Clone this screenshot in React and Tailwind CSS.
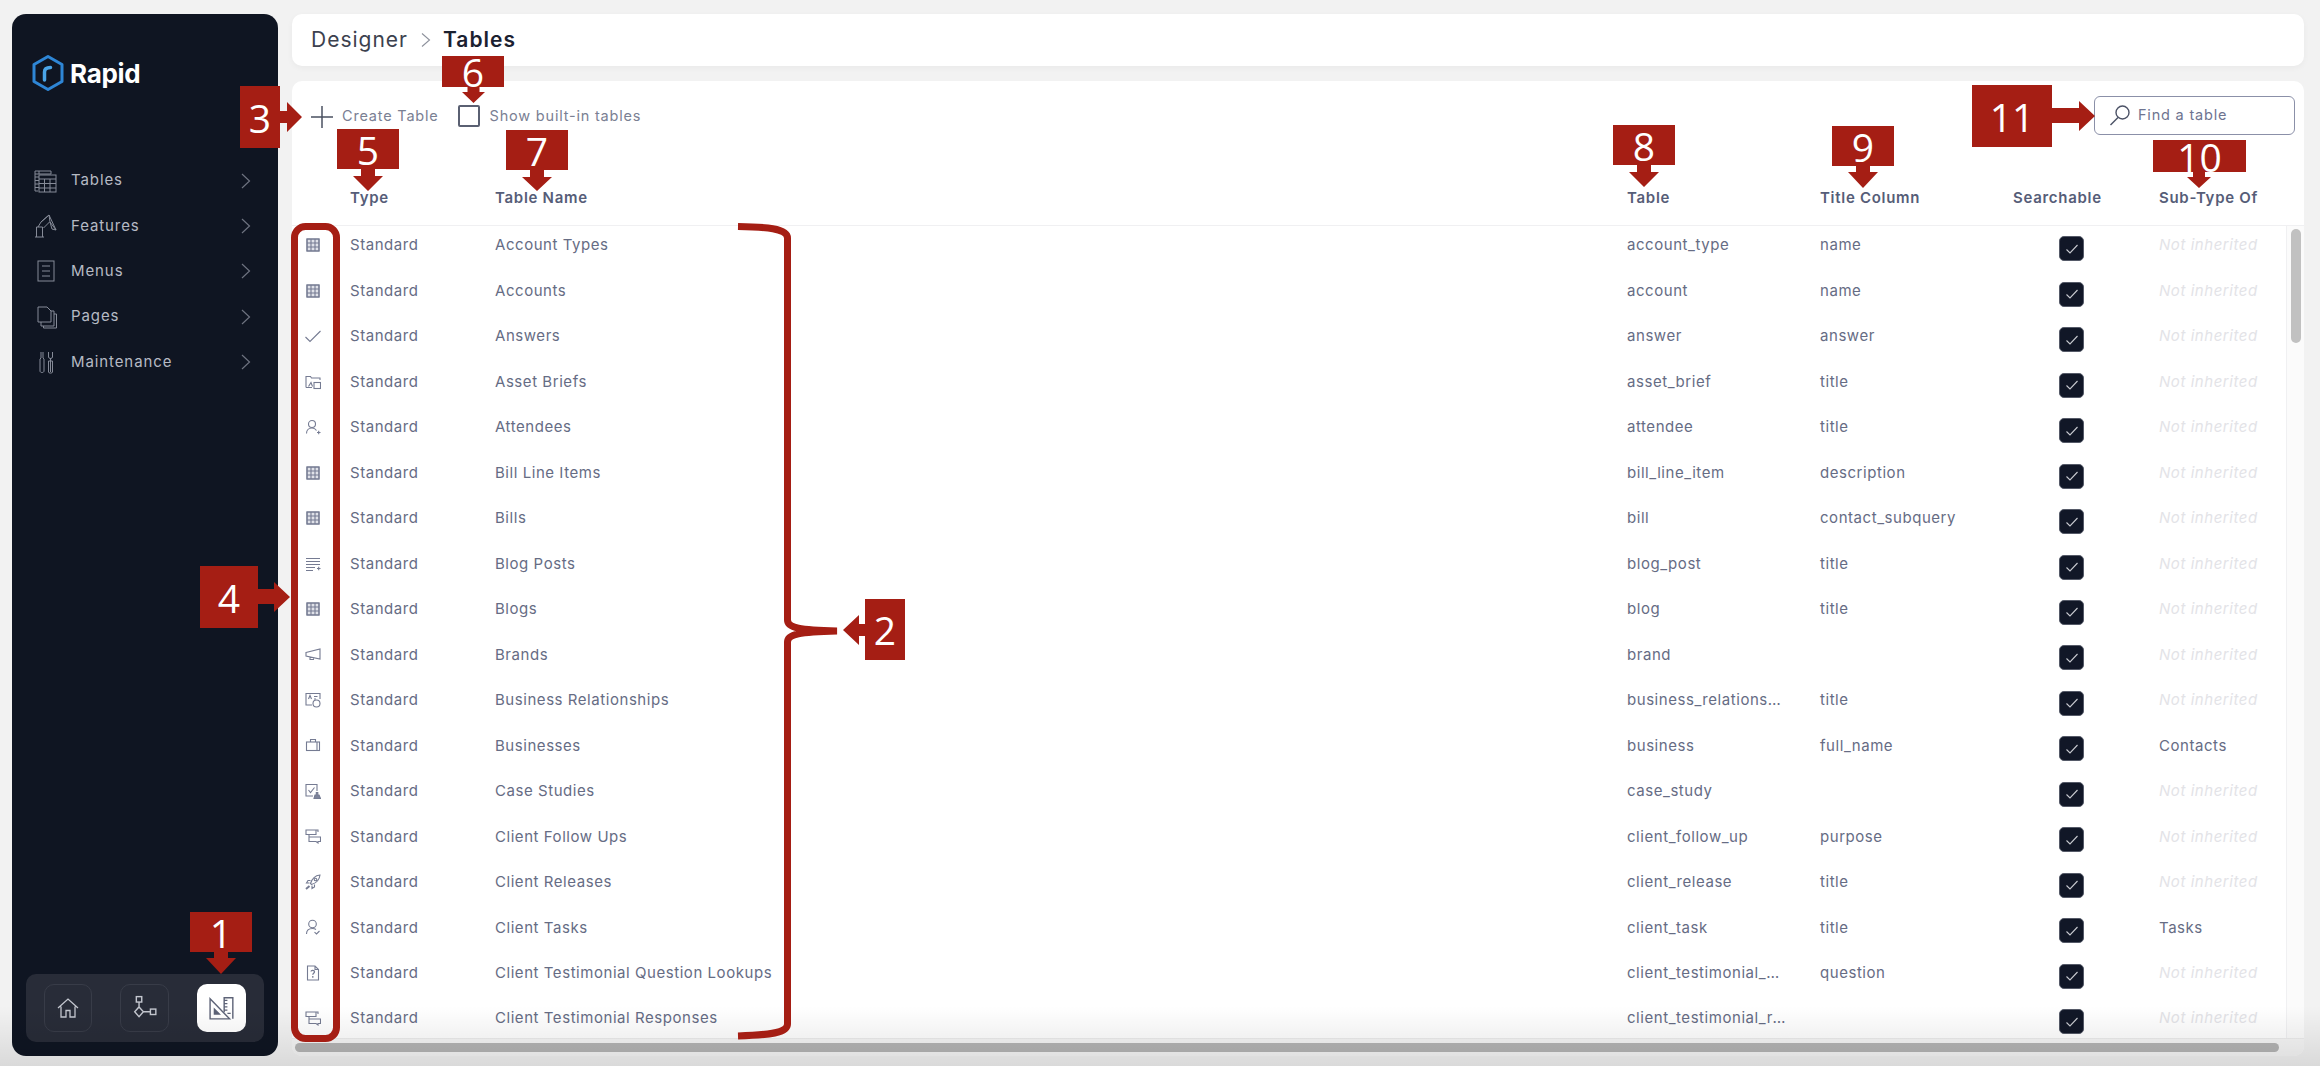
import React from 'react';

const rows = [
    { icon: 'table', name: 'Account Types', table: 'account_type', title: 'name' },
    { icon: 'table', name: 'Accounts', table: 'account', title: 'name' },
    { icon: 'check', name: 'Answers', table: 'answer', title: 'answer' },
    { icon: 'media', name: 'Asset Briefs', table: 'asset_brief', title: 'title' },
    { icon: 'userPlus', name: 'Attendees', table: 'attendee', title: 'title' },
    { icon: 'table', name: 'Bill Line Items', table: 'bill_line_item', title: 'description' },
    { icon: 'table', name: 'Bills', table: 'bill', title: 'contact_subquery' },
    { icon: 'list', name: 'Blog Posts', table: 'blog_post', title: 'title' },
    { icon: 'table', name: 'Blogs', table: 'blog', title: 'title' },
    { icon: 'megaphone', name: 'Brands', table: 'brand', title: '' },
    { icon: 'card', name: 'Business Relationships', table: 'business_relationship', title: 'title' },
    { icon: 'briefcase', name: 'Businesses', table: 'business', title: 'full_name', parent: 'Contacts' },
    { icon: 'caseStudy', name: 'Case Studies', table: 'case_study', title: '' },
    { icon: 'chat', name: 'Client Follow Ups', table: 'client_follow_up', title: 'purpose' },
    { icon: 'rocket', name: 'Client Releases', table: 'client_release', title: 'title' },
    { icon: 'userCheck', name: 'Client Tasks', table: 'client_task', title: 'title', parent: 'Tasks' },
    { icon: 'fileQuestion', name: 'Client Testimonial Question Lookups', table: 'client_testimonial_question_lookup', title: 'question' },
    { icon: 'chat', name: 'Client Testimonial Responses', table: 'client_testimonial_response', title: '' },
];

const menu = [
    { icon: 'tables', label: 'Tables' },
    { icon: 'features', label: 'Features' },
    { icon: 'menus', label: 'Menus' },
    { icon: 'pages', label: 'Pages' },
    { icon: 'maintenance', label: 'Maintenance' },
];

function RowIcon({ type }) {
    const shapes = {
        table: (
            <g transform="translate(1.5 1.5)">
                <rect x="0.5" y="0.5" width="12" height="12" fill="#dfe1e8" />
                <path d="M0.5 0.5h12v12h-12zM0.5 4.5h12M0.5 8.5h12M4.5 0.5v12M8.5 0.5v12" />
            </g>
        ),
        check: <path d="M0.5 9l4.5 4.5L15.5 3" />,
        media: (
            <g>
                <path d="M1 13.5V2.500h4.500l1 1.500h8.500v2M1 13.500h6" />
                <rect x="9" y="8.500" width="6.500" height="6" />
                <path d="M3.500 12.500l2.500-4 1.500 4" />
            </g>
        ),
        userPlus: (
            <g>
                <circle cx="7" cy="5" r="3.500" />
                <path d="M1.500 14.500c0-3.500 2.500-5.500 5.500-5.500 2 0 3.500 1 4.500 2.500M12 13.500h3.500M13.700 11.800v3.500" />
            </g>
        ),
        list: <path d="M1 2.500h14M1 5.500h14M1 8.500h14M1 11.500h9M1 14.500h7M12 12.500h3.500M13.700 10.800v3.500" />,
        megaphone: <path d="M1 6.500l14-3.500v10L1 10zM1 6.500v3.500M5 10.800v2.700h3.500v-2" />,
        card: (
            <g>
                <path d="M7 13H1V1.500h14V7" />
                <path d="M3.500 7l1.500-3.500L6.500 7M9 4.500h3.500M9 7h2" />
                <circle cx="11.500" cy="11.500" r="3.500" />
            </g>
        ),
        briefcase: (
            <g>
                <rect x="1.500" y="5" width="13" height="8.500" />
                <path d="M5.500 5V2.500h5V5M12 5v8.500" />
            </g>
        ),
        caseStudy: (
            <g>
                <path d="M8 13H1V1.500h11V8" />
                <path d="M3.500 7l2 2.500 4-5" />
                <path d="M9 15.500h6.500l-1.500-3.500h-1.200v-2.500h-1.500V12h-1.300z" fill="#7d839a" />
            </g>
        ),
        chat: <path d="M1 2h10v4.500H1zM11 2h2v2M4 6.500V9M4 9h11.500v4.500h-2.500v1.500l-2-1.500H4z" />,
        rocket: (
            <g>
                <path d="M5.500 9.500C7 4.500 10.500 1.500 15 1c-.5 4.500-3.500 8-8.500 9.500zM5.500 6.500H3L1.500 9h3M9.500 10.500V13L7 14.500v-3" />
                <circle cx="10.500" cy="5.500" r="1.300" />
                <path d="M1 15l3.500-3" strokeWidth="2" />
            </g>
        ),
        userCheck: (
            <g>
                <circle cx="7.500" cy="5" r="3.800" />
                <path d="M1.500 15c0-3.500 2.500-5.500 6-5.500 1.500 0 2.500.3 3.500 1M9.500 13.200l2 1.800 3-3" />
            </g>
        ),
        fileQuestion: (
            <g>
                <path d="M2.500 1h7.500l3.500 3.500V15h-11zM10 1v3.500h3.500" />
                <path d="M6 6.500c.2-1.500 3.500-1.500 3.500.3 0 1.500-1.700 1.500-1.700 3M7.800 11v1.800" strokeWidth="1.300" />
            </g>
        ),
    };
    return (
        <svg viewBox="0 0 16 16" fill="none" stroke="#757b92" strokeWidth="1.100" className="w-4 h-4 ml-[13px]">
            {shapes[type]}
        </svg>
    );
}

function MenuIcon({ type }) {
    const shapes = {
        tables: (
            <g>
                <path d="M4 22H1V2h16v3M1 5h16M1 8h4M1 11.500h4M1 15h4M1 18.500h4M5 2v3" />
                <rect x="5" y="6" width="17" height="17" />
                <path d="M5 10h17M5 14.500h17M5 19h17M10.500 10v13M16 10v13" />
            </g>
        ),
        features: (
            <g>
                <path d="M1 23h9M2.500 23V13h6v10M4 13l3-5 8-7 7 15M7 8l8-7M9.500 14l6-6M15 1l1 7 6 8-4-1-2-7" />
            </g>
        ),
        menus: (
            <g>
                <rect x="4" y="2" width="16" height="20" />
                <path d="M8 7h8M8 12h8M8 17h8" />
            </g>
        ),
        pages: (
            <g>
                <path d="M4 17V2h9l4 4v11z" />
                <path d="M17 6h3v15H7v-4M20 9h2.500v14H9.500v-2" />
            </g>
        ),
        maintenance: (
            <g>
                <path d="M7 2v6l-1 1v12c0 2 4 2 4 0V9L9 8V2M16.500 8v14M14.500 22c0 1.500 4 1.500 4 0V11h-4zM14.500 2v5c0 2 4 2 4 0V2" />
            </g>
        ),
    };
    return (
        <svg viewBox="0 0 24 24" fill="none" stroke="#868b98" strokeWidth="1" className="w-6 h-6">
            {shapes[type]}
        </svg>
    );
}

function Sidebar() {
    return (
        <aside className="w-[266px] shrink-0 rounded-[14px] bg-[#0f1522] flex flex-col px-[14px] pb-[14px]">
            <div className="flex items-center gap-[5px] pl-[5px] h-[118px] shrink-0">
                <svg viewBox="0 0 34 38" fill="none" className="w-[34px] h-[38px]">
                    <path d="M17 2.500L31 10.500V27.500L17 35.500L3 27.500V10.500Z" stroke="#2e86d6" strokeWidth="3" strokeLinejoin="round" />
                    <path d="M13.500 26V18c0-3 2-4.500 6-4.500" stroke="#4aa5e8" strokeWidth="3.500" strokeLinecap="round" />
                </svg>
                <span className="text-[26px] font-bold tracking-[-0.3px] text-white">Rapid</span>
            </div>
            <nav className="flex flex-col mt-[26px] pl-[8px] pr-[13px]">
                {menu.map(item => (
                    <div key={item.label} className="h-[45.300px] flex items-center text-[15px] tracking-[0.9px] text-[#b6bac4]">
                        <MenuIcon type={item.icon} />
                        <span className="ml-[13px] flex-1">{item.label}</span>
                        <svg viewBox="0 0 10 16" fill="none" stroke="#6e7380" strokeWidth="1.200" className="w-[10px] h-4">
                            <path d="M1 1l7.500 7L1 15" />
                        </svg>
                    </div>
                ))}
            </nav>
            <div className="mt-auto h-[68px] rounded-[10px] bg-[#282c38] flex items-center justify-between pl-[18px] pr-[18px]">
                <button className="w-[48px] h-[48px] rounded-[10px] border border-[#383c48] flex items-center justify-center">
                    <svg viewBox="0 0 24 24" fill="none" stroke="#c4c7cf" strokeWidth="1.300" className="w-[24px] h-[24px]">
                        <path d="M2 12L12 3l10 9M5 10.500V21h5v-6.500h4V21h5V10.500" />
                    </svg>
                </button>
                <button className="w-[49px] h-[48px] rounded-[10px] border border-[#383c48] flex items-center justify-center">
                    <svg viewBox="0 0 24 24" fill="none" stroke="#c4c7cf" strokeWidth="1.300" className="w-[26px] h-[26px]">
                        <rect x="4" y="1.500" width="5" height="5" />
                        <path d="M6.500 6.500V11M6.500 11l4 4.500-4 4.500-4-4.500zM10.500 15.500H17" />
                        <rect x="17" y="13" width="5" height="5" />
                    </svg>
                </button>
                <button className="w-[49px] h-[48px] rounded-[10px] bg-white flex items-center justify-center">
                    <svg viewBox="0 0 24 24" fill="none" stroke="#5d6377" strokeWidth="1.300" className="w-[26px] h-[26px]">
                        <path d="M1 3.500L19 22H1z" />
                        <path d="M5 17.500h4.500L5 13z" fill="#5d6377" />
                        <path d="M14 6V2.500h8V22M14 6v10M14 5h3M14 8h3M14 11h3M14 14h3M17 17h3" />
                    </svg>
                </button>
            </div>
        </aside>
    );
}

function Checkbox() {
    return (
        <span className="w-[25px] h-[25px] rounded-[5px] bg-[#111727] border border-[#555a68] flex items-center justify-center">
            <svg viewBox="0 0 14 14" fill="none" stroke="#c8cad0" strokeWidth="1.100" className="w-[14px] h-[14px]">
                <path d="M1.500 7.500l3.500 3.500 7.500-8" />
            </svg>
        </span>
    );
}

function TableRow({ row }) {
    return (
        <div className="h-[45.470px] shrink-0 flex items-center text-[15px] tracking-[0.55px] text-[#666c84]">
            <div className="w-[58px] pb-[7px]"><RowIcon type={row.icon} /></div>
            <div className="w-[145px] pb-[6px]">Standard</div>
            <div className="w-[1132px] pb-[6px]">{row.name}</div>
            <div className="w-[193px] pb-[6px] pr-[32px] truncate">{row.table}</div>
            <div className="w-[193px] pb-[6px]">{row.title}</div>
            <div className="w-[146px] pl-[46px]"><Checkbox /></div>
            <div className="flex-1 pb-[6px]">
                {row.parent ? row.parent : <span className="italic text-[#e3e3e7]">Not inherited</span>}
            </div>
        </div>
    );
}

function Annotations() {
    const badges = [
        { n: '1', cls: 'left-[190px] top-[912px] w-[62px] h-[40px]' },
        { n: '2', cls: 'left-[865px] top-[599px] w-[40px] h-[61px]' },
        { n: '3', cls: 'left-[240px] top-[86px] w-[40px] h-[62px]' },
        { n: '4', cls: 'left-[200px] top-[566px] w-[58px] h-[62px]' },
        { n: '5', cls: 'left-[337px] top-[129px] w-[62px] h-[40px]' },
        { n: '6', cls: 'left-[442px] top-[56px] w-[62px] h-[31px]' },
        { n: '7', cls: 'left-[506px] top-[130px] w-[62px] h-[40px]' },
        { n: '8', cls: 'left-[1613px] top-[125px] w-[62px] h-[40px]' },
        { n: '9', cls: 'left-[1832px] top-[126px] w-[62px] h-[40px]' },
        { n: '10', cls: 'left-[2153px] top-[140px] w-[93px] h-[32px]' },
        { n: '11', cls: 'left-[1972px] top-[85px] w-[80px] h-[62px]' },
    ];
    const down = (cx, y0, yHead, yTip, sw, hw) =>
        `${cx - sw},${y0} ${cx + sw},${y0} ${cx + sw},${yHead} ${cx + hw},${yHead} ${cx},${yTip} ${cx - hw},${yHead} ${cx - sw},${yHead}`;
    return (
        <div className="absolute inset-0 pointer-events-none">
            <svg viewBox="0 0 2320 1066" fill="#a51e14" className="absolute inset-0 w-full h-full">
                <polygon points={down(221, 952, 958, 974, 7, 15)} />
                <polygon points={down(368, 169, 176, 191, 7, 15)} />
                <polygon points={down(473.500, 87, 92, 103, 6, 11.500)} />
                <polygon points={down(537, 170, 177, 191, 7, 15)} />
                <polygon points={down(1644, 165, 172, 187, 7, 15)} />
                <polygon points={down(1863, 166, 172, 188, 7, 15)} />
                <polygon points={down(2199, 172, 177, 188, 6, 12)} />
                <polygon points="280,111 287,111 287,102 302,117 287,132 287,123 280,123" />
                <polygon points="258,589 274,589 274,582 290,597 274,612 274,604 258,604" />
                <polygon points="2052,108 2079,108 2079,101 2095,116 2079,131 2079,123 2052,123" />
                <polygon points="865,624 859,624 859,615 843,630 859,645 859,636 865,636" />
                <g fill="none" stroke="#a51e14" strokeWidth="7">
                    <rect x="294.500" y="226.500" width="42" height="812" rx="11" />
                    <path d="M738 226.500C765 227 787.500 228 787.500 238V620C787.500 628 800 630 837 631C800 632 787.500 634 787.500 642V1024C787.500 1033 770 1035 738 1036" />
                </g>
            </svg>
            {badges.map(b => (
                <div key={b.n} className={`absolute bg-[#a51e14] flex items-center justify-center text-white text-[39px] leading-none font-['Open_Sans',sans-serif] ${b.cls}`}>
                    {b.n}
                </div>
            ))}
        </div>
    );
}

export default function App() {
    return (
        <div className="relative h-screen overflow-hidden bg-[#f2f2f2] flex gap-[14px] pl-[12px] pr-[16px] pt-[14px] pb-[10px] font-['Inter',sans-serif]">
            <Sidebar />
            <main className="flex-1 min-w-0 flex flex-col gap-[15px]">
                <header className="h-[52px] shrink-0 rounded-[10px] bg-white shadow-[0_2px_6px_rgba(0,0,0,0.04)] flex items-center pl-[19px] text-[21px] tracking-[1px]">
                    <span className="text-[#3c414e]">Designer</span>
                    <svg viewBox="0 0 10 16" fill="none" stroke="#8d919c" strokeWidth="1.100" className="w-[10px] h-4 ml-[13px] mr-[12px]">
                        <path d="M1 1.500l7.500 6.500L1 14.500" />
                    </svg>
                    <span className="font-semibold text-[#1b2130]">Tables</span>
                </header>
                <section className="flex-1 min-h-0 rounded-[10px] bg-white flex flex-col overflow-hidden">
                    <div className="h-[70px] shrink-0 flex items-center pl-[19px] pr-[9px] text-[14.500px] tracking-[0.8px] text-[#7a8093]">
                        <svg viewBox="0 0 22 22" fill="none" stroke="#4a5060" strokeWidth="1.500" className="w-[22px] h-[22px] mt-[2px]">
                            <path d="M11 0v22M0 11h22" />
                        </svg>
                        <span className="ml-[9px]">Create Table</span>
                        <span className="w-[22px] h-[22px] ml-[19px] rounded-[2px] border-2 border-[#5a6072]" />
                        <span className="ml-[10px]">Show built-in tables</span>
                        <div className="ml-auto w-[201px] h-[39px] mb-[2px] rounded-[6px] border-[1.500px] border-[#8b90a8] flex items-center pl-[14px] text-[#6e7490]">
                            <svg viewBox="0 0 22 22" fill="none" stroke="#4c5266" strokeWidth="1.400" className="w-[22px] h-[22px]">
                                <circle cx="13.500" cy="8.500" r="6.500" />
                                <path d="M9 13.500L1.500 21" />
                            </svg>
                            <span className="ml-[7px]">Find a table</span>
                        </div>
                    </div>
                    <div className="h-[75px] shrink-0 border-b border-[#f0f0f2] flex items-center pt-[20px] text-[15px] font-semibold tracking-[0.7px] text-[#565d78]">
                        <div className="w-[58px]" />
                        <div className="w-[145px]">Type</div>
                        <div className="w-[1132px]">Table Name</div>
                        <div className="w-[193px]">Table</div>
                        <div className="w-[193px]">Title Column</div>
                        <div className="w-[146px]">Searchable</div>
                        <div className="flex-1">Sub-Type Of</div>
                    </div>
                    <div className="flex-1 min-h-0 flex">
                        <div className="flex-1 min-w-0 flex flex-col overflow-hidden">
                            {rows.map(row => <TableRow key={row.name} row={row} />)}
                        </div>
                        <div className="w-[18px] shrink-0 border-l border-[#f0f0f2] bg-[#fbfbfb] pl-[4px] pt-[3px]">
                            <div className="w-[10px] h-[114px] rounded-full bg-[#c1c1c1]" />
                        </div>
                    </div>
                    <div className="h-[18px] shrink-0 border-t border-[#ececec] bg-[#f6f6f6] pl-[3px] pr-[25px] pt-[4px]">
                        <div className="h-[9px] rounded-full bg-[#b5b5b5]" />
                    </div>
                </section>
            </main>
            <div className="absolute left-0 right-0 bottom-0 h-[60px] bg-gradient-to-t from-black/10 to-transparent pointer-events-none" />
            <Annotations />
        </div>
    );
}
